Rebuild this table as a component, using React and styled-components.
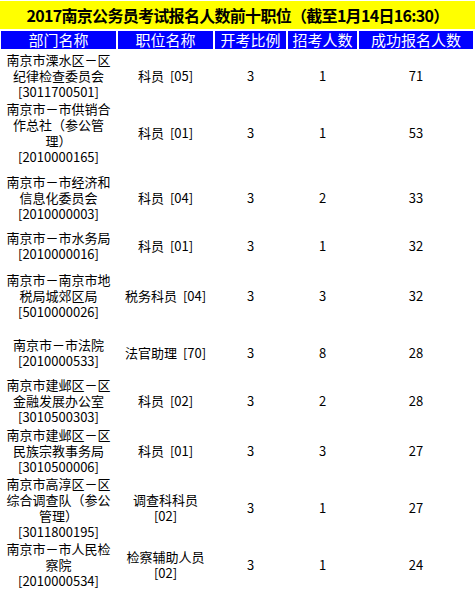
import React from 'react';
import styled, { createGlobalStyle } from 'styled-components';

const GlobalStyle = createGlobalStyle`
  body {
    margin: 0;
    background: #ffffff;
    font-family: "Noto Sans CJK SC", "Noto Sans", sans-serif;
    text-spacing-trim: space-all;
  }
`;

const COLS = '115px 95px 71px 69px 114px';

const Page = styled.div`
  width: 475px;
  padding-top: 1px;
`;

const Title = styled.div`
  height: 28px;
  background: #ffff00;
  color: #000;
  font-size: 16px;
  font-weight: bold;
  line-height: 28px;
  text-align: center;
  letter-spacing: -0.7px;
  white-space: nowrap;
`;

const Table = styled.div`
  display: flex;
  flex-direction: column;
  gap: 1px;
  margin-top: 2px;
  padding-left: 1px;
`;

const Head = styled.div`
  display: grid;
  grid-template-columns: ${COLS};
  column-gap: 2px;
  height: 18px;
  margin-bottom: 1px;
`;

const HeadCell = styled.div`
  background: #0000ff;
  color: #ffffff;
  font-size: 15px;
  line-height: 18px;
  text-align: center;
  white-space: nowrap;
`;

const Row = styled.div`
  display: grid;
  grid-template-columns: ${COLS};
  column-gap: 2px;
  height: ${(p) => p.$h}px;
`;

const Cell = styled.div`
  display: flex;
  flex-direction: column;
  align-items: center;
  justify-content: center;
  text-align: center;
  font-size: 13px;
  line-height: 16px;
  color: #000;
  text-spacing-trim: space-all;
`;

const Line = styled.div`
  width: 100%;
  line-height: 16px;
`;

const JobCode = styled.span`
  margin-left: ${(p) => (p.$block ? 0 : 6)}px;
  display: ${(p) => (p.$block ? 'block' : 'inline')};
`;

const rows = [
  { h: 49, dept: '南京市溧水区－区纪律检查委员会', code: '[3011700501]', job: '科员', jc: '[05]', ratio: 3, plan: 1, total: 71 },
  { h: 64, dept: '南京市－市供销合作总社（参公管理）', code: '[2010000165]', job: '科员', jc: '[01]', ratio: 3, plan: 1, total: 53 },
  { h: 63, dept: '南京市－市经济和信息化委员会', code: '[2010000003]', job: '科员', jc: '[04]', ratio: 3, plan: 2, total: 33 },
  { h: 32, dept: '南京市－市水务局', code: '[2010000016]', job: '科员', jc: '[01]', ratio: 3, plan: 1, total: 32 },
  { h: 66, dept: '南京市－南京市地税局城郊区局', code: '[5010000026]', job: '税务科员', jc: '[04]', ratio: 3, plan: 3, total: 32 },
  { h: 45, dept: '南京市－市法院', code: '[2010000533]', job: '法官助理', jc: '[70]', ratio: 3, plan: 8, total: 28 },
  { h: 50, dept: '南京市建邺区－区金融发展办公室', code: '[3010500303]', job: '科员', jc: '[02]', ratio: 3, plan: 2, total: 28 },
  { h: 48, dept: '南京市建邺区－区民族宗教事务局', code: '[3010500006]', job: '科员', jc: '[01]', ratio: 3, plan: 3, total: 27 },
  { h: 64, dept: '南京市高淳区－区综合调查队（参公管理）', code: '[3011800195]', job: '调查科科员', jc: '[02]', stack: true, ratio: 3, plan: 1, total: 27 },
  { h: 48, dept: '南京市－市人民检察院', code: '[2010000534]', job: '检察辅助人员', jc: '[02]', stack: true, ratio: 3, plan: 1, total: 24 },
];

export default function App() {
  return (
    <Page>
      <GlobalStyle />
      <Title>2017南京公务员考试报名人数前十职位（截至1月14日16:30）</Title>
      <Table>
        <Head>
          <HeadCell>部门名称</HeadCell>
          <HeadCell>职位名称</HeadCell>
          <HeadCell>开考比例</HeadCell>
          <HeadCell>招考人数</HeadCell>
          <HeadCell>成功报名人数</HeadCell>
        </Head>
        {rows.map((r) => (
          <Row key={r.code} $h={r.h}>
            <Cell>
              <Line>{r.dept}</Line>
              <Line>{r.code}</Line>
            </Cell>
            <Cell>
              {r.stack ? (
                <>
                  <Line>{r.job}</Line>
                  <Line>{r.jc}</Line>
                </>
              ) : (
                <Line>
                  {r.job}
                  <JobCode>{r.jc}</JobCode>
                </Line>
              )}
            </Cell>
            <Cell>{r.ratio}</Cell>
            <Cell>{r.plan}</Cell>
            <Cell>{r.total}</Cell>
          </Row>
        ))}
      </Table>
    </Page>
  );
}
